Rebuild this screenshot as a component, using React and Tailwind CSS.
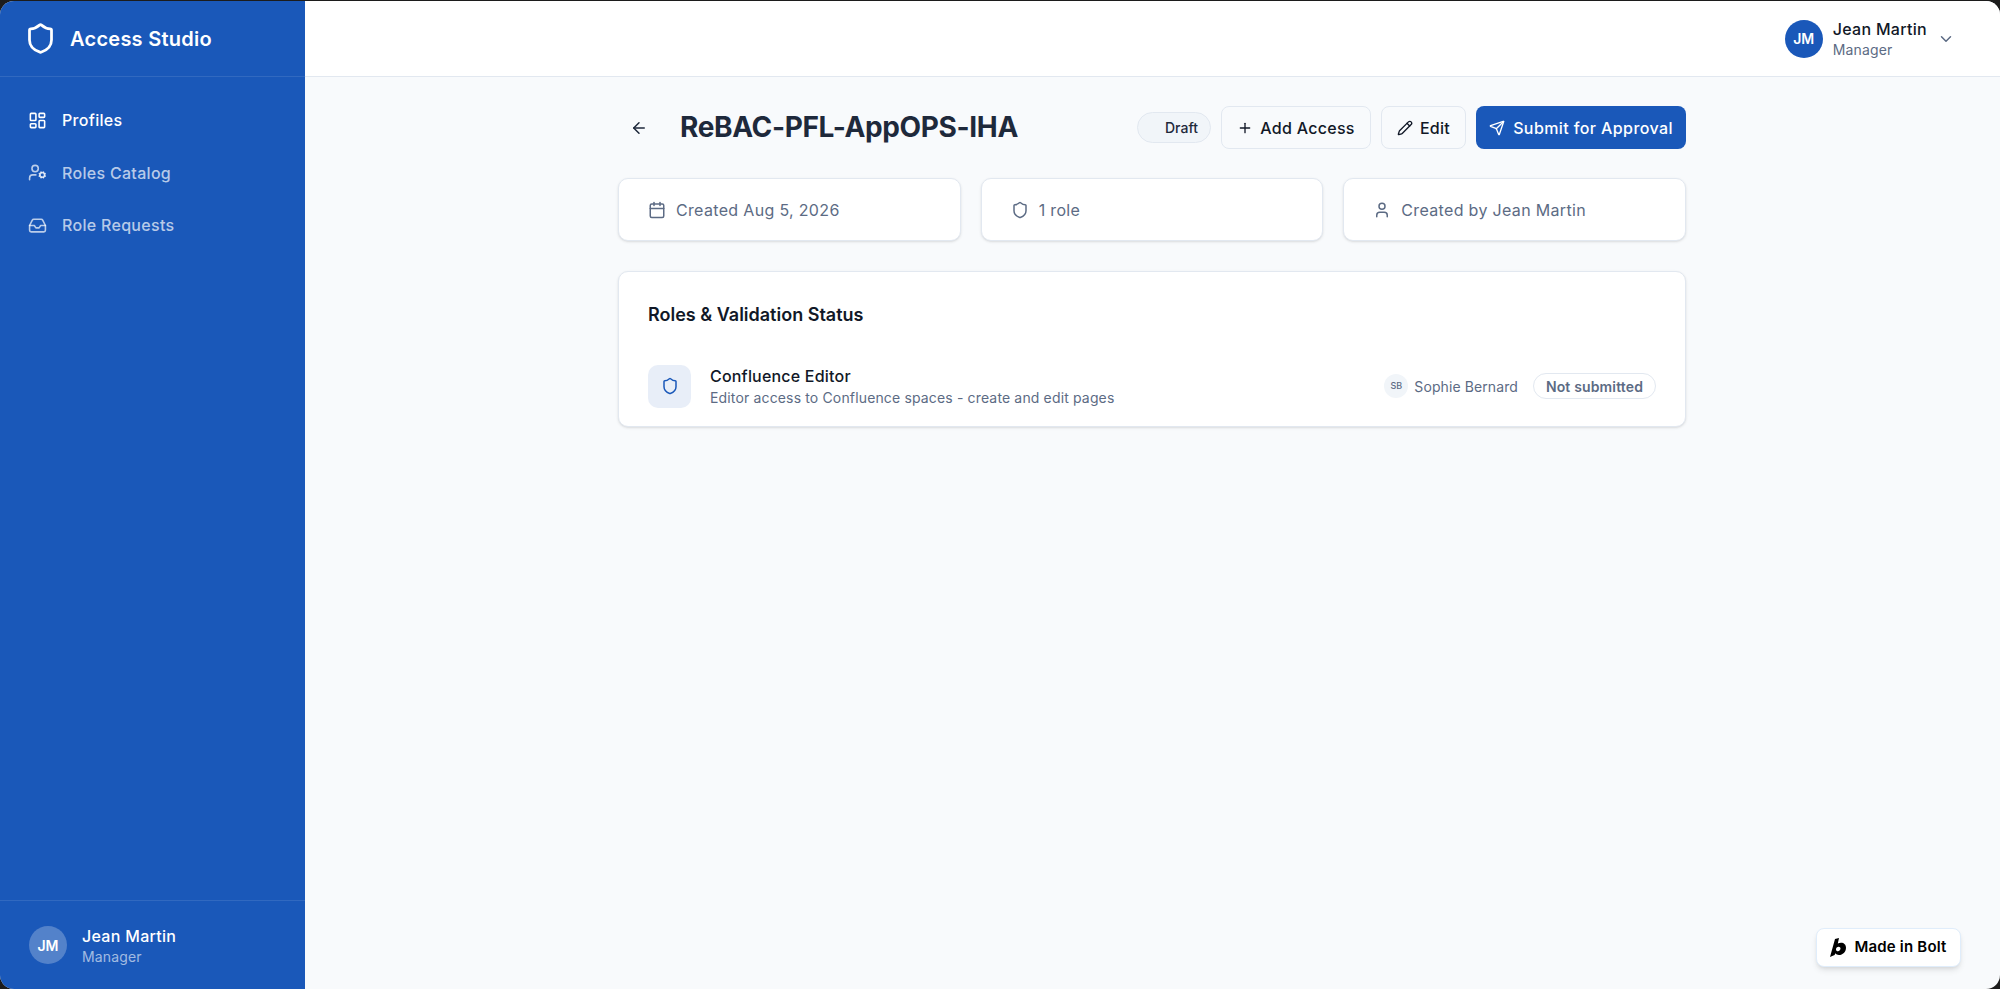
import React from "react";
import {
  ArrowLeft,
  Calendar,
  ChevronDown,
  Inbox,
  LayoutDashboard,
  Pencil,
  Plus,
  Send,
  Shield,
  User,
  UserCog,
} from "lucide-react";

const nav = [
  { label: "Profiles", icon: LayoutDashboard, active: true },
  { label: "Roles Catalog", icon: UserCog },
  { label: "Role Requests", icon: Inbox },
];

const stats = [
  { label: "Created Aug 5, 2026", icon: Calendar },
  { label: "1 role", icon: Shield },
  { label: "Created by Jean Martin", icon: User },
];

function Sidebar() {
  return (
    <aside className="flex w-[305px] shrink-0 flex-col bg-[#1a58b9]">
      <div className="flex h-[76px] items-center gap-[13px] border-b border-white/10 pl-[24px]">
        <Shield className="h-[33px] w-[33px] text-white" strokeWidth={2} />
        <span className="text-[20px] font-semibold tracking-[0.25px] text-white">Access Studio</span>
      </div>
      <nav className="flex flex-1 flex-col gap-[8px] px-[16px] pt-[21px]">
        {nav.map((item) => (
          <a
            key={item.label}
            className={`flex h-[44.5px] items-center gap-[15px] pl-[12px] text-[16px] font-medium tracking-[0.3px] ${
              item.active ? "text-white" : "text-white/70"
            }`}
          >
            <item.icon className="h-[19px] w-[19px]" strokeWidth={2} />
            {item.label}
          </a>
        ))}
      </nav>
      <div className="flex h-[89px] items-center gap-[15px] border-t border-white/10 pl-[29px]">
        <div className="flex h-[38px] w-[38px] items-center justify-center rounded-full bg-white/25 text-[14px] font-semibold text-white">
          JM
        </div>
        <div className="mt-[2px]">
          <div className="text-[16px] leading-[22px] font-medium tracking-[0.3px] text-white">Jean Martin</div>
          <div className="text-[14px] leading-[20px] tracking-[0.15px] text-white/60">Manager</div>
        </div>
      </div>
    </aside>
  );
}

function Header() {
  return (
    <header className="flex h-[76px] shrink-0 items-center justify-end border-b border-[#e2e8f0] bg-white pr-[45px]">
      <div className="flex h-[38px] w-[38px] items-center justify-center rounded-full bg-[#1a58b9] text-[14px] font-semibold text-white">
        JM
      </div>
      <div className="ml-[10px]">
        <div className="text-[16px] leading-[22px] font-medium tracking-[0.3px] text-[#111827]">Jean Martin</div>
        <div className="text-[14px] leading-[20px] tracking-[0.15px] text-[#5c6b84]">Manager</div>
      </div>
      <ChevronDown className="ml-[10px] h-[18px] w-[18px] text-[#5c6b84]" />
    </header>
  );
}

function Toolbar() {
  return (
    <div className="flex items-center">
      <ArrowLeft className="ml-[12px] h-[18px] w-[18px] text-[#1e293b]" strokeWidth={2} />
      <h1 className="ml-[32px] text-[28px] leading-[43px] font-bold tracking-[-0.35px] text-[#1e293b]">
        ReBAC-PFL-AppOPS-IHA
      </h1>
      <div className="ml-auto flex items-center gap-[10px]">
        <span className="flex h-[31px] w-[74px] items-center justify-end rounded-full border border-[#e2e8f0] bg-[#f1f5f9] pr-[12px] text-[14px] font-medium text-[#1e293b]">
          Draft
        </span>
        <button className="flex h-[43px] w-[150px] items-center justify-center gap-[7px] rounded-[8px] border border-[#e2e8f0] bg-transparent text-[16px] font-medium tracking-[0.3px] text-[#111827]">
          <Plus className="h-[16px] w-[16px]" />
          Add Access
        </button>
        <button className="flex h-[43px] w-[85px] items-center justify-center gap-[7px] rounded-[8px] border border-[#e2e8f0] bg-transparent text-[16px] font-medium tracking-[0.3px] text-[#111827]">
          <Pencil className="h-[16px] w-[16px]" />
          Edit
        </button>
        <button className="flex h-[43px] w-[210px] items-center justify-center gap-[8px] rounded-[8px] bg-[#1a58b9] text-[16px] font-medium tracking-[0.4px] text-white">
          <Send className="h-[16px] w-[16px]" />
          Submit for Approval
        </button>
      </div>
    </div>
  );
}

export default function App() {
  return (
    <div className="h-[989px] w-[2000px] overflow-hidden bg-[#1c1c1c] pt-px font-['Inter',sans-serif]">
      <div className="relative flex h-[988px] overflow-hidden rounded-[14px] bg-[#f8fafc]">
        <Sidebar />
        <div className="flex min-w-0 flex-1 flex-col">
          <Header />
          <main className="ml-[313px] w-[1068px] pt-[29px]">
            <Toolbar />
            <div className="mt-[29px] grid grid-cols-3 gap-[20px]">
              {stats.map((s) => (
                <div
                  key={s.label}
                  className="flex h-[63px] items-center gap-[10px] rounded-[10px] border border-[#e2e8f0] bg-white pl-[29px] shadow-sm"
                >
                  <s.icon className="h-[18px] w-[18px] text-[#5c6b84]" strokeWidth={2} />
                  <span className="text-[16px] tracking-[0.33px] text-[#5c6b84]">{s.label}</span>
                </div>
              ))}
            </div>
            <section className="mt-[30px] h-[156px] rounded-[10px] border border-[#e2e8f0] bg-white px-[29px] pt-[29px] shadow-sm">
              <h2 className="text-[18px] leading-[28px] font-semibold tracking-[0px] text-[#111827]">
                Roles &amp; Validation Status
              </h2>
              <div className="mt-[35px] flex items-center">
                <div className="flex h-[43px] w-[43px] items-center justify-center rounded-[10px] bg-[#e8eef8]">
                  <Shield className="h-[18px] w-[18px] text-[#1a58b9]" strokeWidth={2} />
                </div>
                <div className="ml-[19px]">
                  <div className="text-[16px] leading-[24px] font-medium tracking-[0.2px] text-[#111827]">Confluence Editor</div>
                  <div className="text-[14px] leading-[20px] tracking-[0.15px] text-[#5c6b84]">
                    Editor access to Confluence spaces - create and edit pages
                  </div>
                </div>
                <div className="ml-auto flex items-center">
                  <span className="flex h-[24px] w-[24px] items-center justify-center rounded-full bg-[#f1f5f9] text-[9px] font-medium text-[#5c6b84]">
                    SB
                  </span>
                  <span className="ml-[6px] text-[14px] tracking-[0.1px] text-[#5c6b84]">Sophie Bernard</span>
                  <span className="ml-[15px] flex h-[26px] w-[123px] items-center justify-center rounded-full border border-[#e2e8f0] bg-white text-[14px] font-semibold tracking-[0.15px] text-[#5c6b84]">
                    Not submitted
                  </span>
                </div>
              </div>
            </section>
          </main>
        </div>
        <div className="absolute right-[39px] bottom-[22px] flex h-[39px] w-[145px] items-center justify-center gap-[8px] rounded-[8px] border border-[#e0edfb] bg-white text-[15px] font-semibold tracking-[0.2px] text-black shadow-md">
          <svg viewBox="0 0 16 20" className="h-[20px] w-[16px]" fill="currentColor">
            <path d="M5 1l4-1-1.2 5.6C8.8 5 10 4.7 11 4.7c3 0 5 2 5 5 0 4.3-3.4 7.3-7 7.3-1.6 0-2.9-.6-3.6-1.7L4.6 17 0 19zM8.6 8.8c-1.5 0-2.6 1.2-2.6 2.6 0 1.1.8 1.8 1.9 1.8 1.5 0 2.6-1.2 2.6-2.6 0-1.1-.8-1.8-1.9-1.8z" fillRule="evenodd" />
          </svg>
          Made in Bolt
        </div>
      </div>
    </div>
  );
}
